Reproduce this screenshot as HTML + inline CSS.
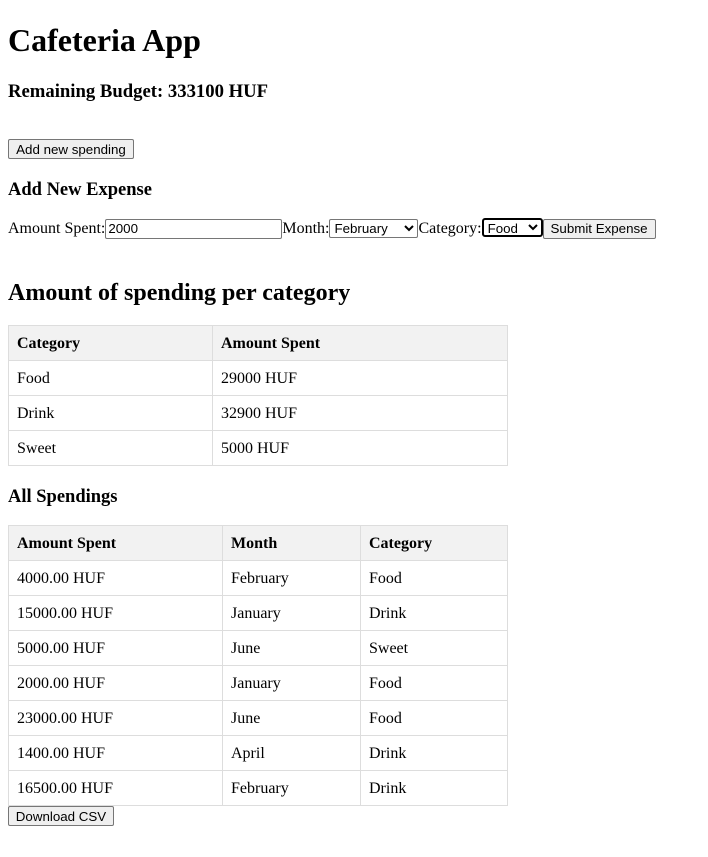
<!DOCTYPE html>
<html><head><style>
body{margin:0;font-family:"Liberation Serif",serif;font-size:16px;color:#000;background:#fff;position:relative;width:708px;height:857px;overflow:hidden}
.a{position:absolute;margin:0}
h1{font-size:32px;font-weight:bold;line-height:37px}
h2{font-size:24px;font-weight:bold;line-height:28px}
h3{font-size:18.72px;font-weight:bold;line-height:22px}
button,input,select{font-family:"Liberation Sans",Arial,sans-serif;font-size:13.33px;box-sizing:border-box}
button{background:#efefef;border:1px solid #767676;border-radius:2px;padding:0 6px;height:20px;color:#000}
input{border:1px solid #767676;border-radius:2px;height:20px;padding:0 2px}
select{border:1px solid #767676;border-radius:2px;height:19px;background:#fff;padding:0}
table{border-collapse:collapse;width:500px;position:absolute;left:8px}
td,th{border:1px solid #ddd;padding:1px 8px 0 8px;height:34px;text-align:left;font-size:16px;box-sizing:border-box}
tr{height:35px}
th{background:#f2f2f2}
.row{position:absolute;left:8px;top:218px;white-space:nowrap;height:20px;line-height:20px}
.row *{vertical-align:baseline}
</style></head><body>
<h1 class="a" style="left:8px;top:22px">Cafeteria App</h1>
<h3 class="a" style="left:8px;top:81px;font-size:18.7px">Remaining Budget: 333100 HUF</h3>
<button class="a" style="left:8px;top:139px;width:126px">Add new spending</button>
<h3 class="a" style="left:8px;top:179px;font-size:18.5px">Add New Expense</h3>
<div class="row">Amount Spent:<input style="width:177px;margin:0" value="2000">Month:<select style="width:89px"><option>February</option></select>Category:<select style="width:61px;border:2px solid #000;border-radius:3px"><option>Food</option></select><button style="width:113px">Submit Expense</button></div>
<h2 class="a" style="left:8px;top:279px">Amount of spending per category</h2>
<table style="top:325px">
<tr><th style="width:204px">Category</th><th>Amount Spent</th></tr>
<tr><td>Food</td><td>29000 HUF</td></tr>
<tr><td>Drink</td><td>32900 HUF</td></tr>
<tr><td>Sweet</td><td>5000 HUF</td></tr>
</table>
<h3 class="a" style="left:8px;top:486px;font-size:18.5px">All Spendings</h3>
<table style="top:525px">
<tr><th style="width:214px">Amount Spent</th><th style="width:138px">Month</th><th>Category</th></tr>
<tr><td>4000.00 HUF</td><td>February</td><td>Food</td></tr>
<tr><td>15000.00 HUF</td><td>January</td><td>Drink</td></tr>
<tr><td>5000.00 HUF</td><td>June</td><td>Sweet</td></tr>
<tr><td>2000.00 HUF</td><td>January</td><td>Food</td></tr>
<tr><td>23000.00 HUF</td><td>June</td><td>Food</td></tr>
<tr><td>1400.00 HUF</td><td>April</td><td>Drink</td></tr>
<tr><td>16500.00 HUF</td><td>February</td><td>Drink</td></tr>
</table>
<button class="a" style="left:8px;top:806px;width:106px">Download CSV</button>
</body></html>
